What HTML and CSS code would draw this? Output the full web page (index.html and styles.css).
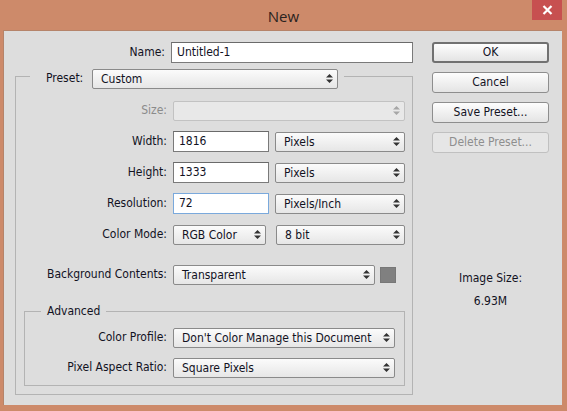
FILE: index.html
```html
<!DOCTYPE html>
<html>
<head>
<meta charset="utf-8">
<link rel="stylesheet" href="styles.css">
</head>
<body>
<div class="window">
  <div class="titlebar">
    <span></span>
    <span class="title">New</span>
    <div class="close">
      <svg width="11" height="10" viewBox="0 0 11 10"><path d="M1.5 1 L9.5 9 M9.5 1 L1.5 9" stroke="#fff" stroke-width="2.2" fill="none"/></svg>
    </div>
  </div>
  <div class="content">
    <div class="main">
      <div class="namerow">
        <span class="lbl name-lbl">Name:</span>
        <div class="input w-name">Untitled-1</div>
      </div>
      <fieldset class="group outer">
        <legend class="outer-legend">
          <span class="lbl preset-lbl">Preset:</span>
          <div class="select w-preset">Custom<span class="arrows"><svg width="7" height="9" viewBox="0 0 7 9"><path d="M3.5 0 L7 3.5 L0 3.5 Z M0 5.5 L7 5.5 L3.5 9 Z" fill="currentColor"/></svg></span></div>
        </legend>
        <div class="rows">
          <div class="row">
            <span class="lbl row-lbl disabled-text">Size:</span>
            <div class="select disabled w-size"><span class="arrows"><svg width="7" height="9" viewBox="0 0 7 9"><path d="M3.5 0 L7 3.5 L0 3.5 Z M0 5.5 L7 5.5 L3.5 9 Z" fill="currentColor"/></svg></span></div>
          </div>
          <div class="row">
            <span class="lbl row-lbl">Width:</span>
            <div class="input w-num">1816</div>
            <div class="select w-unit">Pixels<span class="arrows"><svg width="7" height="9" viewBox="0 0 7 9"><path d="M3.5 0 L7 3.5 L0 3.5 Z M0 5.5 L7 5.5 L3.5 9 Z" fill="currentColor"/></svg></span></div>
          </div>
          <div class="row">
            <span class="lbl row-lbl">Height:</span>
            <div class="input w-num">1333</div>
            <div class="select w-unit">Pixels<span class="arrows"><svg width="7" height="9" viewBox="0 0 7 9"><path d="M3.5 0 L7 3.5 L0 3.5 Z M0 5.5 L7 5.5 L3.5 9 Z" fill="currentColor"/></svg></span></div>
          </div>
          <div class="row">
            <span class="lbl row-lbl">Resolution:</span>
            <div class="input w-num focused">72</div>
            <div class="select w-unit">Pixels/Inch<span class="arrows"><svg width="7" height="9" viewBox="0 0 7 9"><path d="M3.5 0 L7 3.5 L0 3.5 Z M0 5.5 L7 5.5 L3.5 9 Z" fill="currentColor"/></svg></span></div>
          </div>
          <div class="row">
            <span class="lbl row-lbl">Color Mode:</span>
            <div class="select w-mode">RGB Color<span class="arrows"><svg width="7" height="9" viewBox="0 0 7 9"><path d="M3.5 0 L7 3.5 L0 3.5 Z M0 5.5 L7 5.5 L3.5 9 Z" fill="currentColor"/></svg></span></div>
            <div class="select w-bit">8 bit<span class="arrows"><svg width="7" height="9" viewBox="0 0 7 9"><path d="M3.5 0 L7 3.5 L0 3.5 Z M0 5.5 L7 5.5 L3.5 9 Z" fill="currentColor"/></svg></span></div>
          </div>
          <div class="row row-bg">
            <span class="lbl row-lbl">Background Contents:</span>
            <div class="select w-bg">Transparent<span class="arrows"><svg width="7" height="9" viewBox="0 0 7 9"><path d="M3.5 0 L7 3.5 L0 3.5 Z M0 5.5 L7 5.5 L3.5 9 Z" fill="currentColor"/></svg></span></div>
            <div class="swatch"></div>
          </div>
          <fieldset class="group advanced">
            <legend class="adv-legend">Advanced</legend>
            <div class="rows adv-rows">
              <div class="row">
                <span class="lbl adv-lbl">Color Profile:</span>
                <div class="select w-adv">Don't Color Manage this Document<span class="arrows"><svg width="7" height="9" viewBox="0 0 7 9"><path d="M3.5 0 L7 3.5 L0 3.5 Z M0 5.5 L7 5.5 L3.5 9 Z" fill="currentColor"/></svg></span></div>
              </div>
              <div class="row">
                <span class="lbl adv-lbl">Pixel Aspect Ratio:</span>
                <div class="select w-adv">Square Pixels<span class="arrows"><svg width="7" height="9" viewBox="0 0 7 9"><path d="M3.5 0 L7 3.5 L0 3.5 Z M0 5.5 L7 5.5 L3.5 9 Z" fill="currentColor"/></svg></span></div>
              </div>
            </div>
          </fieldset>
        </div>
      </fieldset>
    </div>
    <div class="side">
      <div class="btn default">OK</div>
      <div class="btn">Cancel</div>
      <div class="btn">Save Preset...</div>
      <div class="btn btn-disabled">Delete Preset...</div>
      <div class="imgsize">
        <div>Image Size:</div>
        <div class="imgsize-val">6.93M</div>
      </div>
    </div>
  </div>
</div>
</body>
</html>
```
FILE: styles.css
```css
* { box-sizing: border-box; }
html, body { margin: 0; padding: 0; }
body { width: 567px; height: 411px; overflow: hidden; }

.window {
  width: 567px;
  height: 411px;
  background: #cd8a6a;
  display: flex;
  flex-direction: column;
  font-family: "DejaVu Sans Condensed", "DejaVu Sans", sans-serif;
  font-size: 12px;
  color: #12121f;
}

.titlebar {
  height: 30px;
  display: grid;
  grid-template-columns: 1fr auto 1fr;
  align-items: start;
}
.title {
  font-family: "Open Sans", "Noto Sans", sans-serif;
  font-size: 15px;
  color: #2a2320;
  line-height: 30px;
  padding-top: 1px;
}
.close {
  justify-self: end;
  margin-right: 5px;
  width: 30px;
  height: 20px;
  background: #c75050;
  display: flex;
  align-items: center;
  justify-content: center;
}

.content {
  flex: 1;
  margin: 0 5px 6px 3px;
  background: #dddddd;
  border-top: 1px solid #b6846a;
  border-left: 1px solid #b6846a;
  display: flex;
}

.main {
  width: 410px;
  padding-top: 11px;
  margin-left: -1px;
}

.lbl { white-space: nowrap; line-height: 15px; }
.disabled-text { color: #8b8b8b; }

.namerow { display: flex; align-items: center; height: 21px; }
.name-lbl { width: 164px; text-align: right; margin-right: 6px; }

.input {
  height: 21px;
  background: #fff;
  border: 1px solid #7a7a7a;
  border-top-color: #6a6a6a;
  padding-left: 5px;
  line-height: 19px;
  white-space: nowrap;
  flex: none;
}
.input.focused { border-color: #7aa9dc; }

.select {
  position: relative;
  height: 20px;
  border: 1px solid #8a8a8a;
  border-radius: 2px;
  background: linear-gradient(#fbfbfb, #e6e6e6);
  padding-left: 8px;
  line-height: 18px;
  white-space: nowrap;
  flex: none;
}
.select.disabled {
  border-color: #c2c2c2;
  background: #e8e8e8;
}
.arrows {
  position: absolute;
  right: 4px;
  top: 4px;
  width: 7px;
  height: 9px;
  color: #333;
  display: flex;
}
.select.disabled .arrows { color: #a6a6a6; }

.w-name { width: 242px; }
.w-preset { width: 246px; }
.w-size { width: 232px; }
.w-num { width: 96px; }
.w-unit { width: 130px; margin-left: 6px; }
.w-mode { width: 93px; }
.w-bit { width: 129px; margin-left: 10px; }
.w-bg { width: 202px; }
.w-adv { width: 222px; }

.swatch {
  width: 16px;
  height: 16px;
  margin-left: 5px;
  background: #808080;
  border: 1px solid #777;
  flex: none;
}

.group {
  border: 1px solid #b3b3b3;
  margin: 0;
  padding: 0;
  min-width: 0;
}
.outer {
  margin: 5px 0 0 12px;
  width: 398px;
  padding-bottom: 8px;
}
.outer-legend {
  margin-left: 14px;
  padding: 0 6px 0 16px;
  height: 16px;
  display: flex;
  align-items: flex-start;
}
.outer-legend .lbl { margin-right: 6px; margin-top: 3px; }
.preset-lbl { width: 40px; }
.outer-legend .select { margin-top: 1px; }

.rows {
  display: flex;
  flex-direction: column;
  gap: 10px;
  margin-top: 16px;
}
.row {
  display: flex;
  align-items: center;
  height: 21px;
}
.row-lbl { width: 151px; text-align: right; margin-right: 6px; flex: none; }
.row-bg { margin-top: 9px; }

.advanced {
  margin: 9px 7px 0 8px;
  padding-bottom: 7px;
}
.adv-legend {
  margin-left: 16px;
  padding: 0 6px;
  line-height: 14px;
}
.adv-rows { margin-top: 9px; gap: 9px; }
.adv-lbl { width: 142px; text-align: right; margin-right: 6px; flex: none; }

.side {
  width: 117px;
  margin-left: 19px;
  padding-top: 11px;
  display: flex;
  flex-direction: column;
  gap: 9px;
}
.btn {
  height: 21px;
  border: 1px solid #8e8e8e;
  border-radius: 3px;
  background: linear-gradient(#fdfdfd, #e4e4e4);
  text-align: center;
  line-height: 19px;
  white-space: nowrap;
}
.btn.default { border: 2px solid #717171; line-height: 17px; }
.btn-disabled { color: #8e8e8e; border-color: #c0c0c0; background: #e6e6e6; }

.imgsize {
  margin-top: 109px;
  text-align: center;
  display: flex;
  flex-direction: column;
  gap: 8px;
  line-height: 15px;
}
```
